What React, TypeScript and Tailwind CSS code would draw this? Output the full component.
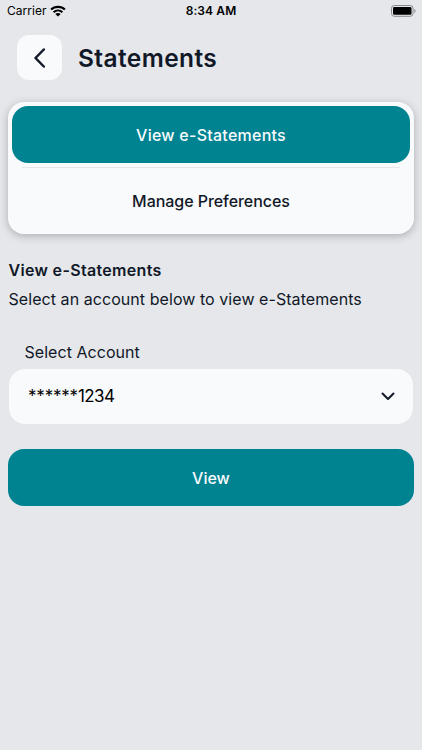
import { useState } from "react";

const tabs = [
  { id: "view", label: "View e-Statements", tracking: "tracking-[0.25px]" },
  { id: "manage", label: "Manage Preferences", tracking: "tracking-[-0.05px]" },
];

function StatusBar() {
  return (
    <div className="grid h-[22px] grid-cols-3 items-center pr-[6px] pl-[7px] text-[12px] leading-[14px] text-black">
      <div className="flex items-center gap-[3px]">
        <span className="tracking-[0.05px]">Carrier</span>
        <svg width="16" height="12" viewBox="0 0 16 12" fill="none">
          <path d="M1.1 4.5C4.8 .9 11.2 .9 14.9 4.5" stroke="black" strokeWidth="2.3" />
          <path d="M3.6 7.2c2.5-2.2 6.3-2.2 8.8 0" stroke="black" strokeWidth="2.1" />
          <path d="M8 11.6 5.3 8.9c1.5-1.3 3.9-1.3 5.4 0z" fill="black" />
        </svg>
      </div>
      <span className="-ml-px text-center font-semibold tracking-[0.1px]">8:34 AM</span>
      <svg className="justify-self-end" width="25" height="12" viewBox="0 0 25 12" fill="none">
        <rect x="0.5" y="0.5" width="21.5" height="10.8" rx="2.8" stroke="#88898b" />
        <rect x="2" y="2" width="18.5" height="7.8" rx="1.4" fill="black" />
        <path d="M23.3 4v4c1.6-.6 1.6-3.4 0-4z" fill="#88898b" />
      </svg>
    </div>
  );
}

export default function App() {
  const [active, setActive] = useState("view");

  return (
    <div className="h-[750px] w-[422px] overflow-hidden bg-[#e5e7eb] font-['Inter','Noto_Sans',sans-serif] text-[#111827]">
      <StatusBar />

      <header className="mt-[13px] flex items-center gap-4 pl-[17px]">
        <button
          type="button"
          aria-label="Back"
          className="flex h-[45px] w-[45px] items-center justify-center rounded-xl bg-[#f9fafb]"
        >
          <svg width="14" height="20" viewBox="0 0 14 20" fill="none">
            <path
              d="M10.8 1.5 2.5 10l8.3 8.5"
              stroke="#111827"
              strokeWidth="2.5"
              strokeLinecap="round"
              strokeLinejoin="round"
            />
          </svg>
        </button>
        <h1 className="text-[24.5px] leading-8 font-semibold tracking-[0.4px]">Statements</h1>
      </header>

      <main className="px-2 pt-[22px]">
        <div className="h-[132px] rounded-2xl bg-[#f9fafb] p-1 shadow-[0_2px_8px_rgba(0,0,0,0.25)]">
          {tabs.map((tab, i) => (
            <div key={tab.id}>
              {i > 0 && <div className="mx-[10px] my-1 h-px bg-[#e5e7eb]" />}
              <button
                type="button"
                onClick={() => setActive(tab.id)}
                className={`flex h-[57px] w-full items-center justify-center rounded-2xl text-[16px] font-medium ${tab.tracking} ${
                  active === tab.id ? "bg-[#008391] text-[#f9fafb]" : "text-[#111827]"
                }`}
              >
                {tab.label}
              </button>
            </div>
          ))}
        </div>

        <h2 className="mt-[24px] pl-[0.5px] text-[16px] leading-6 font-semibold tracking-[0.32px]">
          View e-Statements
        </h2>
        <p className="mt-[5px] pl-[0.5px] text-[16px] leading-6 tracking-[0.06px] whitespace-nowrap">
          Select an account below to view e-Statements
        </p>

        <div className="mt-[29px] pl-[16.5px] text-[16px] leading-6 tracking-[0.04px]">
          Select Account
        </div>
        <button
          type="button"
          className="mx-px mt-[5px] flex h-[55px] w-[404px] items-center justify-between rounded-2xl bg-[#f9fafb] pr-[18px] pl-[19px] text-[17px] text-black"
        >
          <span className="tracking-[-0.6px]">
            <span className="tracking-[-0.2px]">******</span>1234
          </span>
          <svg width="14" height="9" viewBox="0 0 14 9" fill="none">
            <path
              d="M1.5 1.5 7 7l5.5-5.5"
              stroke="#111827"
              strokeWidth="2"
              strokeLinecap="round"
              strokeLinejoin="round"
            />
          </svg>
        </button>

        <button
          type="button"
          className="mt-[25px] h-[57px] w-full rounded-2xl bg-[#008391] text-[16px] font-medium text-[#f9fafb]"
        >
          View
        </button>
      </main>
    </div>
  );
}
